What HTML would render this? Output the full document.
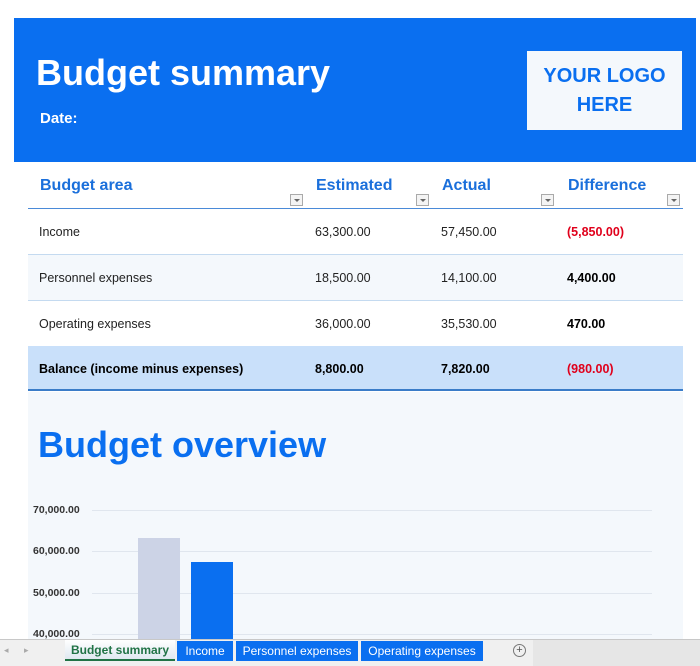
<!DOCTYPE html>
<html><head><meta charset="utf-8"><style>
*{margin:0;padding:0;box-sizing:border-box}
body{width:700px;height:666px;background:#fff;position:relative;overflow:hidden;font-family:"Liberation Sans",sans-serif}
.a{position:absolute;white-space:nowrap}
.hdr{left:14px;top:18px;width:682px;height:144px;background:#0a6ff0}
.logo{left:527px;top:51px;width:155px;height:79px;background:#f4f8fc;color:#0a6ff0;font-weight:bold;font-size:20px;text-align:center;line-height:29px;padding-top:11px}
.th{color:#1a6fdb;font-weight:bold;font-size:16px;top:177px}
.dd{width:13px;height:12px;border:1px solid #aaa;background:#f4f4f4;top:194px}
.dd:after{content:"";position:absolute;left:3px;top:4px;border-left:3px solid transparent;border-right:3px solid transparent;border-top:3px solid #666}
.row{left:28px;width:655px;height:46px}
.c{font-size:12.5px;color:#222}
.b{font-weight:bold;color:#000}
.r{color:#e0001b;font-weight:bold}
.yl{font-size:10.5px;font-weight:bold;color:#333;left:33px}
.gl{left:92px;width:560px;height:1px;background:#e0e6ee}
</style></head><body>
<div class="a hdr"></div>
<div class="a" style="left:36px;top:52px;color:#fff;font-weight:bold;font-size:36px">Budget summary</div>
<div class="a" style="left:40px;top:110px;color:#fff;font-weight:bold;font-size:15px">Date:</div>
<div class="a logo">YOUR LOGO<br>HERE</div>

<div class="a th" style="left:40px">Budget area</div>
<div class="a th" style="left:316px">Estimated</div>
<div class="a th" style="left:442px">Actual</div>
<div class="a th" style="left:568px">Difference</div>
<div class="a dd" style="left:290px"></div>
<div class="a dd" style="left:416px"></div>
<div class="a dd" style="left:541px"></div>
<div class="a dd" style="left:667px"></div>
<div class="a" style="left:28px;top:208px;width:655px;height:1px;background:#4a8ad8"></div>

<div class="a row" style="top:209px;background:#fff;border-bottom:1px solid #c4daf0"></div>
<div class="a row" style="top:255px;background:#f4f8fc;border-bottom:1px solid #c4daf0"></div>
<div class="a row" style="top:301px;background:#fff"></div>
<div class="a row" style="top:346px;height:45px;background:#c9e0fa;border-bottom:2px solid #3a7cc8"></div>

<div class="a c" style="left:39px;top:225px">Income</div>
<div class="a c" style="left:315px;top:225px">63,300.00</div>
<div class="a c" style="left:441px;top:225px">57,450.00</div>
<div class="a c r" style="left:567px;top:225px">(5,850.00)</div>

<div class="a c" style="left:39px;top:271px">Personnel expenses</div>
<div class="a c" style="left:315px;top:271px">18,500.00</div>
<div class="a c" style="left:441px;top:271px">14,100.00</div>
<div class="a c b" style="left:567px;top:271px">4,400.00</div>

<div class="a c" style="left:39px;top:317px">Operating expenses</div>
<div class="a c" style="left:315px;top:317px">36,000.00</div>
<div class="a c" style="left:441px;top:317px">35,530.00</div>
<div class="a c b" style="left:567px;top:317px">470.00</div>

<div class="a c b" style="left:39px;top:362px">Balance (income minus expenses)</div>
<div class="a c b" style="left:315px;top:362px">8,800.00</div>
<div class="a c b" style="left:441px;top:362px">7,820.00</div>
<div class="a c r" style="left:567px;top:362px">(980.00)</div>

<div class="a" style="left:28px;top:392px;width:655px;height:248px;background:#f4f8fc"></div>
<div class="a" style="left:38px;top:424px;color:#0a6ff0;font-weight:bold;font-size:36px">Budget overview</div>
<div class="a yl" style="top:504px">70,000.00</div>
<div class="a yl" style="top:545px">60,000.00</div>
<div class="a yl" style="top:587px">50,000.00</div>
<div class="a yl" style="top:628px">40,000.00</div>
<div class="a gl" style="top:510px"></div>
<div class="a gl" style="top:551px"></div>
<div class="a gl" style="top:593px"></div>
<div class="a gl" style="top:634px"></div>
<div class="a" style="left:138px;top:538px;width:42px;height:102px;background:#ccd3e6"></div>
<div class="a" style="left:191px;top:562px;width:42px;height:78px;background:#0a6ff0"></div>

<div class="a" style="left:0;top:639px;width:700px;height:27px;background:#f0f0f0;border-top:1px solid #c8c8c8"></div>
<div class="a" style="left:4px;top:645px;font-size:9px;color:#aaa">◂</div>
<div class="a" style="left:24px;top:645px;font-size:9px;color:#aaa">▸</div>
<div class="a" style="left:65px;top:640px;width:110px;height:21px;background:linear-gradient(#fff,#dfe8f0);border-bottom:2px solid #217346;color:#217346;font-weight:bold;font-size:12px;text-align:center;line-height:21px">Budget summary</div>
<div class="a" style="left:177px;top:641px;width:56px;height:20px;background:#0a6ff0;color:#fff;font-size:12px;text-align:center;line-height:20px">Income</div>
<div class="a" style="left:236px;top:641px;width:122px;height:20px;background:#0a6ff0;color:#fff;font-size:12px;text-align:center;line-height:20px">Personnel expenses</div>
<div class="a" style="left:361px;top:641px;width:122px;height:20px;background:#0a6ff0;color:#fff;font-size:12px;text-align:center;line-height:20px">Operating expenses</div>
<div class="a" style="left:513px;top:644px;width:13px;height:13px;border:1px solid #777;border-radius:50%;font-size:11px;line-height:11px;text-align:center;color:#555">+</div>
<div class="a" style="left:533px;top:640px;width:167px;height:26px;background:#e6e6e6"></div>
</body></html>
